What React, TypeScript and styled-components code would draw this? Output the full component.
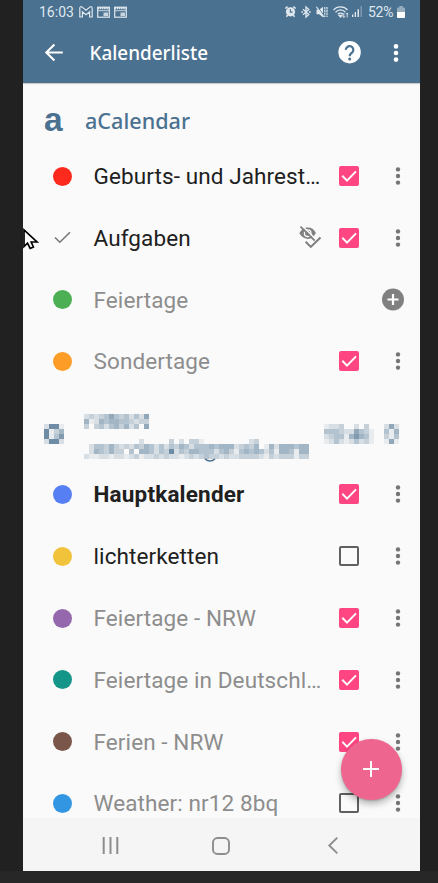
import React from "react";
import styled, { createGlobalStyle } from "styled-components";

const GlobalStyle = createGlobalStyle`
  *, *::before, *::after { box-sizing: border-box; }
  body { margin: 0; background: #212121; overflow: hidden; }
  svg { display: block; flex: none; overflow: visible; }
`;

const Desktop = styled.div`
  position: relative;
  width: 438px;
  height: 883px;
  padding: 0 18px 0 23px;
  background: linear-gradient(#212121 871px, #272727 871px);
  font-family: Roboto, sans-serif;
  overflow: hidden;
`;
const Phone = styled.div`
  position: relative;
  display: flex;
  flex-direction: column;
  height: 871px;
  width: 397px;
  background: #fafafa;
  overflow: hidden;
`;
const TopArea = styled.header`
  height: 83px;
  flex: none;
  background: #4b7190;
  color: #fff;
  box-shadow: 0 1px 1px rgba(0, 0, 0, 0.18);
  z-index: 1;
`;
const StatusBar = styled.div`
  display: flex;
  align-items: center;
  height: 23px;
  padding: 0 15px 0 16px;
  color: #dfe8ee;
  font-size: 14px;
`;
const StatusGroup = styled.div<{ $gap: number; $end?: boolean }>`
  display: flex;
  align-items: center;
  gap: ${(p) => p.$gap}px;
  margin-left: ${(p) => (p.$end ? "auto" : "0")};
`;
const Clock = styled.span`
  width: 36px;
  margin-right: 4px;
`;
const Signal = styled.span`
  margin-left: -2px;
`;
const Percent = styled.span`
  width: 27px;
  margin-left: 1px;
  margin-right: -3px;
  letter-spacing: -0.3px;
`;
const AppBar = styled.div`
  display: flex;
  align-items: center;
  height: 60px;
  padding: 0 21px 0 22px;
`;
const Title = styled.h1`
  flex: 1;
  margin: 0 0 0 26.5px;
  font: 500 18.9px "Noto Sans", sans-serif;
`;
const BarButton = styled.button<{ $left?: number }>`
  display: flex;
  padding: 0;
  margin-left: ${(p) => p.$left ?? 0}px;
  border: 0;
  background: none;
`;
const List = styled.main`
  flex: 1;
  min-height: 0;
  overflow: hidden;
`;
const SectionHeader = styled.div`
  display: flex;
  align-items: center;
  height: 62.2px;
  padding: 13px 0 0 21px;
  color: #4b7190;
`;
const Logo = styled.span`
  width: 41px;
  font: 700 33.5px/30px "Liberation Sans", sans-serif;
  padding-bottom: 2px;
`;
const SectionName = styled.h2`
  margin: 0;
  font: 500 21.6px "Noto Sans", sans-serif;
`;
const Account = styled.div`
  display: flex;
  height: 71.2px;
  padding: 16.8px 21px 0 21px;
`;
const AccountPart = styled.div<{ $top?: number; $left?: number }>`
  display: flex;
  flex-direction: column;
  gap: 10px;
  margin: ${(p) => p.$top ?? 0}px 0 0 ${(p) => p.$left ?? 0}px;
`;
const Row = styled.div`
  display: flex;
  align-items: center;
  height: 61.8px;
  padding: 0 19px 0 30px;
`;
const Marker = styled.span`
  display: flex;
  justify-content: center;
  width: 19px;
  flex: none;
`;
const Dot = styled.span<{ $color: string }>`
  width: 19px;
  height: 19px;
  border-radius: 50%;
  background: ${(p) => p.$color};
`;
const Name = styled.span<{ $tone: Tone }>`
  flex: 1;
  margin-left: 21.5px;
  white-space: nowrap;
  font-size: 22.5px;
  line-height: 30px;
  letter-spacing: ${(p) => (p.$tone === "bold" ? 0.18 : 0.1)}px;
  font-weight: ${(p) => (p.$tone === "bold" ? 700 : 400)};
  color: ${(p) => (p.$tone === "muted" ? "#8d8d8d" : "#202020")};
`;
const Check = styled.span<{ $on: boolean }>`
  display: flex;
  align-items: center;
  justify-content: center;
  flex: none;
  width: 20px;
  height: 20px;
  margin-right: 36.2px;
  border-radius: 2px;
  border: ${(p) => (p.$on ? "0" : "2px solid #606060")};
  background: ${(p) => (p.$on ? "#ff4683" : "transparent")};
`;
const HiddenMark = styled.span`
  margin-right: 17.5px;
`;
const AddButton = styled.button`
  display: flex;
  padding: 0;
  margin-right: -3px;
  border: 0;
  background: none;
`;
const NavBar = styled.nav`
  display: flex;
  flex: none;
  height: 53px;
  padding: 2px 31.5px 0 31.5px;
  background: #f5f5f5;
`;
const NavButton = styled.button`
  display: flex;
  flex: 1;
  align-items: center;
  justify-content: center;
  padding: 0;
  border: 0;
  background: none;
`;
const Fab = styled.button`
  position: absolute;
  left: 317.6px;
  top: 738.7px;
  display: flex;
  align-items: center;
  justify-content: center;
  width: 61.5px;
  height: 61.5px;
  padding: 0;
  border: 0;
  border-radius: 50%;
  background: #ee6590;
  box-shadow: 0 4px 7px rgba(0, 0, 0, 0.28), 0 1px 2px rgba(0, 0, 0, 0.15);
`;
const Pointer = styled.div`
  position: absolute;
  left: 22.5px;
  top: 228.5px;
`;

type Tone = "normal" | "muted" | "bold";

/* Redacted text: each digit is the strength of one 5px tile. */
const Mosaic = ({ rows, descender }: { rows: string[]; descender?: number }) => (
  <svg width={rows[0].length * 5} height={rows.length * 5} shapeRendering="crispEdges">
    {rows.flatMap((row, y) =>
      [...row].map((v, x) =>
        v === "0" ? null : (
          <rect key={`${x}-${y}`} x={x * 5} y={y * 5} width="5" height="5" fill="#4b7190" fillOpacity={Number(v) / 10} />
        ),
      ),
    )}
    {descender !== undefined && (
      <path
        d={`M${descender} ${rows.length * 5}q5 4 10 0`}
        fill="none"
        stroke="#4b7190"
        strokeWidth="1.6"
        shapeRendering="auto"
      />
    )}
  </svg>
);

const AVATAR = ["2881", "8135", "8147", "2882"];
const FIRST_LINE = ["2323464342426", "5125455443233", "3034245352406"];
const SECOND_LINE = [
  "000000000002000003020331000000000230000000000",
  "024435323243542424354244454555234350152555455",
  "025435330405542438243554442453145454241554155",
  "211221221231223232212323433232233332132333133",
];
const TIME = ["1223002030", "4443226431", "2344157541", "1242124231"];
const RING = ["262", "415", "314", "161"];

const MoreDots = ({ color, r, step }: { color: string; r: number; step: number }) => (
  <svg width="6" height="22" viewBox="-3 -11 6 22" fill={color}>
    <circle cy={-step} r={r} />
    <circle r={r} />
    <circle cy={step} r={r} />
  </svg>
);

const CheckGlyph = () => (
  <svg width="20" height="20" fill="none" stroke="#fff" strokeWidth="2">
    <path d="M3.3 9.8 8 14.6 17 5.4" />
  </svg>
);

const EyeTask = () => (
  <svg width="22" height="23" fill="none" stroke="#808080">
    <path d="M0.3 7.2C2.8 3 5.8 1.6 9 1.6s6 1.6 7.9 5.4C15 10.9 12 12.9 9 12.9S2.5 11.2 0.3 7.2Z" fill="#808080" stroke="none" />
    <circle cx="8.7" cy="7.2" r="3.3" strokeWidth="1.3" stroke="#fafafa" />
    <path d="M3.2 0 17.7 14" stroke="#fafafa" strokeWidth="1.6" />
    <path d="M1.5 0.6 15.7 14.6" strokeWidth="1.8" />
    <path d="M6.6 15.8 11.8 20.9 21.5 11.4" strokeWidth="2.1" />
  </svg>
);

const AddGlyph = () => (
  <svg width="22" height="22">
    <circle cx="11" cy="10.5" r="11" fill="#808080" />
    <path d="M11 5v11M5.5 10.5h11" stroke="#fff" strokeWidth="2.2" />
  </svg>
);

const Tick = () => (
  <svg width="17" height="13" fill="none" stroke="#777" strokeWidth="1.6">
    <path d="M1 6.5 5.8 11.2 16 1.2" />
  </svg>
);

const MailIcon = () => (
  <svg width="14" height="12" fill="none" stroke="currentColor" strokeWidth="1.2">
    <path d="M.8 2.2V11h2.6V5.8L7 8.7l3.6-2.9V11h2.6V2.2C13.2.5 11.7.4 10.8 1.1L7 4.2 3.2 1.1C2.3.4.8.5.8 2.2Z" />
  </svg>
);

const PanelIcon = () => (
  <svg width="13" height="12" fill="none" stroke="currentColor">
    <rect x=".7" y="1.2" width="11.6" height="10" strokeWidth="1.2" />
    <path d="M.5 2.2h12" strokeWidth="2.2" strokeDasharray="1.6 .6" />
    <path d="M1 4.7h11" strokeWidth=".8" />
    <rect x="6.5" y="6.5" width="4.5" height="3.6" fill="currentColor" stroke="none" opacity=".85" />
  </svg>
);

const AlarmIcon = () => (
  <svg width="11" height="11" fill="currentColor">
    <circle cx="5.5" cy="5.8" r="4.6" />
    <path d="M.3 2.5 2.6.6M10.7 2.5 8.4.6M1.4 10.7 2.8 9M9.6 10.7 8.2 9" stroke="currentColor" strokeWidth="1.5" />
    <path d="M5.4 3.2v2.9h2.3" fill="none" stroke="#4b7190" strokeWidth="1.2" />
  </svg>
);

const BluetoothIcon = () => (
  <svg width="10" height="12" fill="none" stroke="currentColor" strokeWidth="1.3">
    <path d="M2 3.3 7.8 8.6 5 11V1l2.8 2.4L2 8.7" />
    <path d="M.3 6h1.7M8 6h1.7" />
  </svg>
);

const MuteIcon = () => (
  <svg width="12" height="12" fill="currentColor">
    <path d="M.5 3.8h2.7L7 .8v10.4L3.2 8.2H.5Z" />
    <path d="M1.4.6 8.8 10.6" stroke="#4b7190" strokeWidth="1" />
    <path d="M.4.9 8 11" stroke="currentColor" strokeWidth="1.1" />
    <path d="M8.8 1v10M11 1v10" stroke="currentColor" strokeWidth="1.2" strokeDasharray="2.2 .6" />
  </svg>
);

const WifiIcon = () => (
  <svg width="16" height="12" fill="none" stroke="currentColor" strokeWidth="1.3">
    <path d="M.5 4C4-.2 11-.2 14.5 4M2.5 6.3C5.3 3 9.7 3 12.5 6.3M4.8 8.3c1.7-1.7 3.7-1.7 5.3 0" />
    <path d="M6.2 9.5 7.5 11 8.8 9.5Z" fill="currentColor" />
    <path d="M10.8 7v4.5M9.6 10.2l1.2 1.3 1.2-1.3M14.2 11.5V7M13 8.3 14.2 7l1.2 1.3" strokeWidth=".9" />
  </svg>
);

const SignalIcon = () => (
  <svg width="10" height="11" fill="currentColor">
    <rect y="8.5" width="1.3" height="2.5" />
    <rect x="2.7" y="6" width="1.3" height="5" />
    <rect x="5.5" y="3.3" width="1.5" height="7.7" />
    <rect x="8.5" y="0" width="1.5" height="11" opacity=".35" />
  </svg>
);

const BatteryIcon = () => (
  <svg width="8" height="12" fill="currentColor">
    <path d="M0 2.5Q0 1.5 1 1.5H2.3V0H5.7V1.5H7Q8 1.5 8 2.5V6H0Z" opacity=".5" />
    <path d="M0 6H8V11Q8 12 7 12H1Q0 12 0 11Z" fill="#fff" />
  </svg>
);

interface Calendar {
  name: string;
  color?: string;
  tone?: Tone;
  checked?: boolean;
  addable?: boolean;
  hidden?: boolean;
}

const LOCAL: Calendar[] = [
  { name: "Geburts- und Jahrest…", color: "#fb2a1c", checked: true },
  { name: "Aufgaben", checked: true, hidden: true },
  { name: "Feiertage", color: "#4caf54", tone: "muted", addable: true },
  { name: "Sondertage", color: "#fd9c27", tone: "muted", checked: true },
];
const ONLINE: Calendar[] = [
  { name: "Hauptkalender", color: "#557ff3", tone: "bold", checked: true },
  { name: "lichterketten", color: "#f1c33a", checked: false },
  { name: "Feiertage - NRW", color: "#9568ae", tone: "muted", checked: true },
  { name: "Feiertage in Deutschl…", color: "#139688", tone: "muted", checked: true },
  { name: "Ferien - NRW", color: "#795649", tone: "muted", checked: true },
  { name: "Weather: nr12 8bq", color: "#3296e3", tone: "muted", checked: false },
];

const CalendarRow = ({ item }: { item: Calendar }) => (
  <Row>
    <Marker>{item.color ? <Dot $color={item.color} /> : <Tick />}</Marker>
    <Name $tone={item.tone ?? "normal"}>{item.name}</Name>
    {item.hidden && (
      <HiddenMark>
        <EyeTask />
      </HiddenMark>
    )}
    {item.addable ? (
      <AddButton aria-label="Hinzufügen">
        <AddGlyph />
      </AddButton>
    ) : (
      <>
        <Check $on={!!item.checked}>{item.checked && <CheckGlyph />}</Check>
        <MoreDots color="#757575" r={2.2} step={6.6} />
      </>
    )}
  </Row>
);

export default function App() {
  return (
    <Desktop>
      <GlobalStyle />
      <Phone>
        <TopArea>
          <StatusBar>
            <Clock>16:03</Clock>
            <StatusGroup $gap={4}>
              <MailIcon />
              <PanelIcon />
              <PanelIcon />
            </StatusGroup>
            <StatusGroup $gap={5} $end>
              <AlarmIcon />
              <BluetoothIcon />
              <MuteIcon />
              <WifiIcon />
              <Signal>
                <SignalIcon />
              </Signal>
              <Percent>52%</Percent>
              <BatteryIcon />
            </StatusGroup>
          </StatusBar>
          <AppBar>
            <BarButton aria-label="Zurück">
              <svg width="18" height="18" fill="none" stroke="#fff" strokeWidth="2.1">
                <path d="M17.8 8.5H1.5M9.4.4 1.3 8.5l8.1 8.1" />
              </svg>
            </BarButton>
            <Title>Kalenderliste</Title>
            <BarButton aria-label="Hilfe">
              <svg width="22" height="22">
                <circle cx="10.6" cy="10.2" r="11.2" fill="#fff" />
                <path d="M6.9 7.9a3.7 3.7 0 1 1 6.5 2.3C12.2 11.5 10.7 11.9 10.7 14.2" fill="none" stroke="#4b7190" strokeWidth="2.2" />
                <circle cx="10.7" cy="17" r="1.5" fill="#4b7190" />
              </svg>
            </BarButton>
            <BarButton aria-label="Menü" $left={32.3}>
              <MoreDots color="#fff" r={2.3} step={6.6} />
            </BarButton>
          </AppBar>
        </TopArea>
        <List>
          <SectionHeader>
            <Logo>a</Logo>
            <SectionName>aCalendar</SectionName>
          </SectionHeader>
          {LOCAL.map((c) => (
            <CalendarRow key={c.name} item={c} />
          ))}
          <Account>
            <AccountPart $top={15}>
              <Mosaic rows={AVATAR} />
            </AccountPart>
            <AccountPart $left={20} $top={5}>
              <Mosaic rows={FIRST_LINE} />
              <Mosaic rows={SECOND_LINE} descender={121} />
            </AccountPart>
            <AccountPart $left={15} $top={15}>
              <Mosaic rows={TIME} />
            </AccountPart>
            <AccountPart $left={10} $top={15}>
              <Mosaic rows={RING} />
            </AccountPart>
          </Account>
          {ONLINE.map((c) => (
            <CalendarRow key={c.name} item={c} />
          ))}
        </List>
        <NavBar>
          <NavButton aria-label="Letzte Apps">
            <svg width="17" height="17" stroke="#8d8d8d" strokeWidth="2">
              <path d="M1.7 0v17M8.5 0v17M15.3 0v17" />
            </svg>
          </NavButton>
          <NavButton aria-label="Start">
            <svg width="18" height="18" fill="none" stroke="#8d8d8d" strokeWidth="1.9">
              <rect x="1" y="1" width="16" height="16" rx="4.5" />
            </svg>
          </NavButton>
          <NavButton aria-label="Zurück">
            <svg width="10" height="17" fill="none" stroke="#8d8d8d" strokeWidth="1.9">
              <path d="M9.3.6 1.3 8.5l8 7.9" />
            </svg>
          </NavButton>
        </NavBar>
        <Fab aria-label="Neu">
          <svg width="16" height="16" stroke="#fff" strokeWidth="2">
            <path d="M8 0v16M0 8h16" />
          </svg>
        </Fab>
      </Phone>
      <Pointer>
        <svg width="16" height="21">
          <path d="M1 1V17.5L4.5 14.2 7.2 19.5 10.4 18 8.2 13H14Z" fill="#fff" stroke="#000" strokeWidth="1.7" />
        </svg>
      </Pointer>
    </Desktop>
  );
}
